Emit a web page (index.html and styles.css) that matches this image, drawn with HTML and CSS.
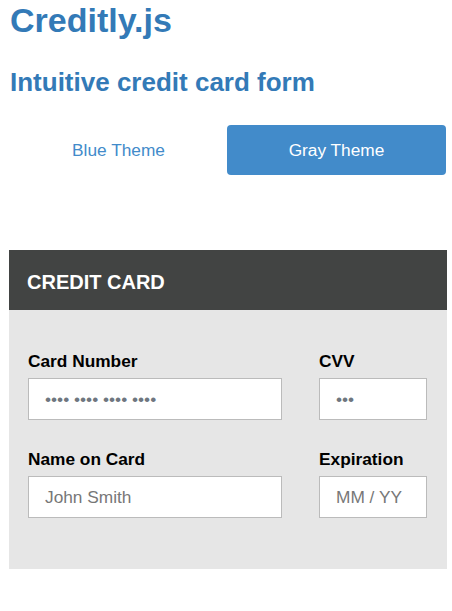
FILE: index.html
```html
<!DOCTYPE html>
<html>
<head>
<meta charset="utf-8">
<link rel="stylesheet" href="styles.css">
</head>
<body>
<div class="page">
  <h1 class="title">Creditly.js</h1>
  <h2 class="subtitle">Intuitive credit card form</h2>
  <div class="themes">
    <button class="theme theme-blue">Blue Theme</button>
    <button class="theme theme-gray">Gray Theme</button>
  </div>
  <div class="card">
    <div class="card-head">CREDIT CARD</div>
    <div class="card-body">
      <div class="field">
        <label class="label">Card Number</label>
        <input class="input input-dots" type="text" placeholder="•••• •••• •••• ••••">
      </div>
      <div class="field">
        <label class="label">CVV</label>
        <input class="input input-dots" type="text" placeholder="•••">
      </div>
      <div class="field">
        <label class="label">Name on Card</label>
        <input class="input" type="text" placeholder="John Smith">
      </div>
      <div class="field">
        <label class="label">Expiration</label>
        <input class="input" type="text" placeholder="MM / YY">
      </div>
    </div>
  </div>
</div>
</body>
</html>
```
FILE: styles.css
```css
html, body {
  margin: 0;
  padding: 0;
  background: #ffffff;
}
body {
  font-family: "Liberation Sans", Arial, sans-serif;
}
.page {
  padding: 0 5px 0 9px;
}
.title {
  margin: 0;
  padding: 1px 0 0 1px;
  font-size: 34px;
  line-height: 38px;
  font-weight: bold;
  color: #337ab7;
}
.subtitle {
  margin: 28px 0 0;
  padding-left: 1px;
  font-size: 26px;
  line-height: 30px;
  font-weight: bold;
  color: #337ab7;
}
.themes {
  display: grid;
  grid-template-columns: 217px 219px;
  margin: 28px 0 0 1px;
  height: 50px;
}
.theme {
  border: 0;
  border-radius: 4px;
  font-family: "Liberation Sans", Arial, sans-serif;
  font-size: 17.3px;
  padding: 0;
  height: 50px;
}
.theme-blue {
  background: transparent;
  color: #428bca;
}
.theme-gray {
  background: #428bca;
  color: #ffffff;
}
.card {
  margin-top: 75px;
  width: 438px;
}
.card-head {
  height: 60px;
  box-sizing: border-box;
  padding: 4px 18px 0;
  line-height: 56px;
  background: #424443;
  color: #ffffff;
  font-size: 20px;
  font-weight: bold;
}
.card-body {
  background: #e6e6e6;
  display: grid;
  grid-template-columns: 254px 108px;
  column-gap: 37px;
  padding: 41px 20px 22px 19px;
}
.field {
  display: flex;
  flex-direction: column;
  margin-bottom: 29px;
}
.label {
  font-size: 17.3px;
  line-height: 20px;
  font-weight: bold;
  color: #000000;
  margin-bottom: 7px;
}
.input {
  box-sizing: border-box;
  height: 42px;
  width: 100%;
  margin: 0;
  border: 1px solid #bbbbbb;
  background: #ffffff;
  padding: 0 0 0 16px;
  font-family: "Liberation Sans", Arial, sans-serif;
  font-size: 17.3px;
  color: #333333;
  outline: none;
}
.input::placeholder {
  color: #777777;
  opacity: 1;
}
.input-dots::placeholder {
  color: #6f7680;
}
```
